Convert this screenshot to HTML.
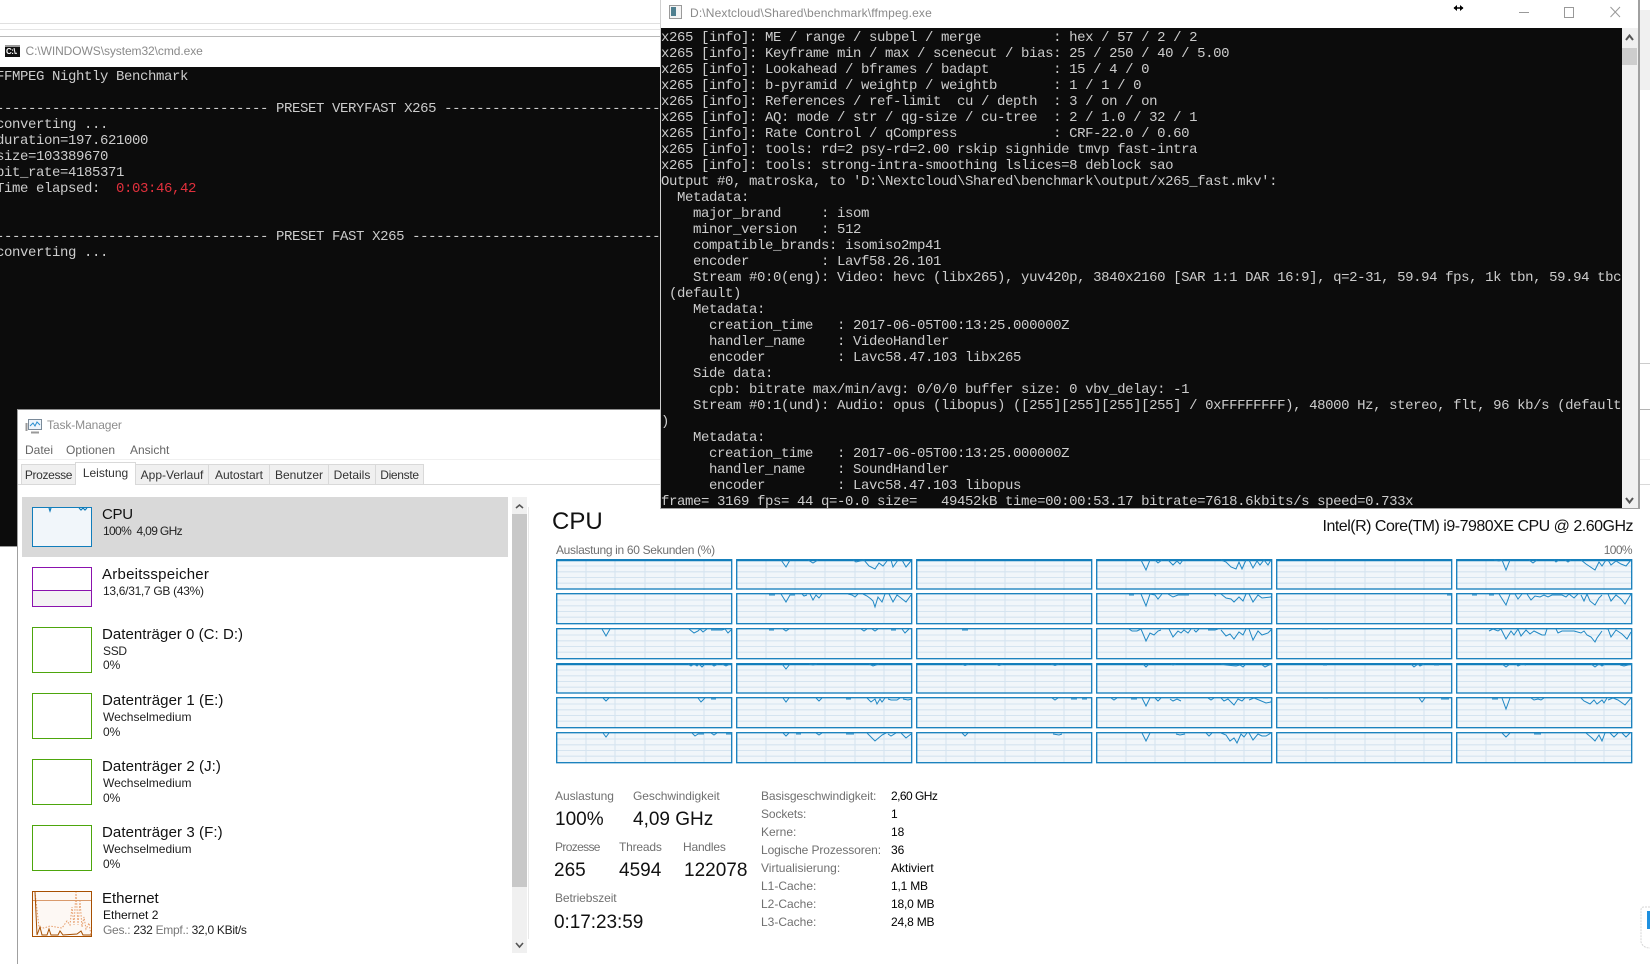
<!DOCTYPE html>
<html lang="de"><head><meta charset="utf-8"><title>FFmpeg Benchmark</title>
<style>
html,body{margin:0;padding:0;background:#fff;width:1650px;height:964px;overflow:hidden}
body{position:relative;font-family:"Liberation Sans",sans-serif;font-size:12px;color:#000}
div,pre,span.t{position:absolute}
.t{position:absolute;white-space:pre;line-height:16px}
pre{margin:0;font-family:"Liberation Mono",monospace;font-size:14px;letter-spacing:-.4px;line-height:16px;color:#ccc;white-space:pre}
.g{color:#707070}
.h{font-size:15px;line-height:18px;color:#111}
.s{color:#222}
.v{font-size:19px;line-height:22px;color:#111}
.tab{box-sizing:border-box;top:464px;height:21px;background:#f0f0f0;border:1px solid #d9d9d9;border-bottom:1px solid #d9d9d9;text-align:center;line-height:20px;color:#333;white-space:pre}
.th{box-sizing:border-box;left:32px;width:60px;background:#fff;border:1px solid #4da60c}
svg{position:absolute;left:0;top:0}
</style></head><body>

<!-- background window lines -->
<div style="left:0;top:23px;width:661px;height:1px;background:#e0e0e0"></div>
<div style="left:0;top:29px;width:661px;height:1px;background:#e4e4e4"></div>
<div style="left:0;top:36px;width:661px;height:1px;background:#b8b8b8"></div>

<!-- cmd window -->
<div style="left:0;top:67px;width:700px;height:343px;background:#0c0c0c"></div>
<div style="left:0;top:400px;width:17px;height:146px;background:#0c0c0c"></div>
<div style="left:0;top:546px;width:17px;height:1px;background:#999"></div>
<div style="left:5px;top:45px;width:15px;height:12px;background:#111;border-top:2px solid #999;box-sizing:border-box"></div>
<span class="t" style="left:6px;top:47px;font-size:8px;line-height:9px;color:#fff;font-weight:bold;letter-spacing:-.5px">C:\.</span>
<span class="t" style="left:25.500px;top:43px;color:#8a8a8a;letter-spacing:-.08px">C:\WINDOWS\system32\cmd.exe</span>
<pre style="left:-4px;top:69px;width:665px;overflow:hidden">FFMPEG Nightly Benchmark

---------------------------------- PRESET VERYFAST X265 --------------------------------------------------------------
converting ...
duration=197.621000
size=103389670
bit_rate=4185371
Time elapsed:  <span style="color:#e0303c">0:03:46,42</span>


---------------------------------- PRESET FAST X265 ------------------------------------------------------------------
converting ...</pre>

<!-- task manager -->
<div style="left:17px;top:409px;width:1633px;height:555px;background:#fff;border-left:1px solid #a0a0a0;border-top:1px solid #8c8c8c;box-sizing:border-box"></div>
<svg width="1650" height="964" style="z-index:1">
<g fill="none" stroke="#777" stroke-width="1">
<rect x="28.500" y="419.500" width="13" height="10" fill="#eef5fb" stroke="#7a8a99"/>
<path d="M30,426 33,423 35,426 37,422 40,425" stroke="#2a8fd0"/>
<path d="M26.500,423 V431 M31,432.500 H39" stroke="#999" stroke-width="2"/>
</g>
</svg>
<span class="t g" style="left:47px;top:417px;color:#8c8c8c;letter-spacing:-.1px">Task-Manager</span>
<span class="t" style="left:25px;top:442px;color:#666">Datei</span>
<span class="t" style="left:66px;top:442px;color:#666;letter-spacing:.05px">Optionen</span>
<span class="t" style="left:130px;top:442px;color:#666">Ansicht</span>
<div style="left:18px;top:459px;width:1632px;height:1px;background:#f0f0f0"></div>
<div style="left:18px;top:484px;width:1632px;height:1px;background:#d9d9d9"></div>
<div class="tab" style="left:21px;width:55px;letter-spacing:-.35px">Prozesse</div>
<div class="tab" style="left:135px;width:74px">App-Verlauf</div>
<div class="tab" style="left:208px;width:62px">Autostart</div>
<div class="tab" style="left:269px;width:60px">Benutzer</div>
<div class="tab" style="left:328px;width:48px">Details</div>
<div class="tab" style="left:375px;width:49px;letter-spacing:-.3px">Dienste</div>
<div class="tab" style="left:75px;width:61px;top:462px;height:23px;background:#fff;border-bottom:0;line-height:20px">Leistung</div>

<!-- sidebar -->
<div style="left:22px;top:497px;width:486px;height:60px;background:#d9d9d9"></div>
<div class="th" style="top:507px;height:40px;background:#f1f6fa;border-color:#117dbb"></div>
<span class="t h" style="left:102px;top:506px;letter-spacing:-.3px">CPU</span>
<span class="t s" style="left:103px;top:523px;letter-spacing:-.65px">100%  4,09 GHz</span>

<div class="th" style="top:567px;height:40px;border-color:#8b12ae"></div>
<div style="left:33px;top:590px;width:58px;height:16px;background:#f4f2f4;border-top:1px solid #8b12ae;box-sizing:border-box"></div>
<span class="t h" style="left:102px;top:566px;letter-spacing:.25px">Arbeitsspeicher</span>
<span class="t s" style="left:103px;top:583px;letter-spacing:-.3px">13,6/31,7 GB (43%)</span>

<div class="th" style="top:627px;height:46px"></div>
<span class="t h" style="left:102px;top:626px;letter-spacing:.05px">Datenträger 0 (C: D:)</span>
<span class="t s" style="left:103px;top:643px;letter-spacing:-.3px">SSD</span>
<span class="t s" style="left:103px;top:657px">0%</span>

<div class="th" style="top:693px;height:46px"></div>
<span class="t h" style="left:102px;top:692px;letter-spacing:.08px">Datenträger 1 (E:)</span>
<span class="t s" style="left:103px;top:709px">Wechselmedium</span>
<span class="t s" style="left:103px;top:724px">0%</span>

<div class="th" style="top:759px;height:46px"></div>
<span class="t h" style="left:102px;top:758px;letter-spacing:.08px">Datenträger 2 (J:)</span>
<span class="t s" style="left:103px;top:775px">Wechselmedium</span>
<span class="t s" style="left:103px;top:790px">0%</span>

<div class="th" style="top:825px;height:46px"></div>
<span class="t h" style="left:102px;top:824px;letter-spacing:.08px">Datenträger 3 (F:)</span>
<span class="t s" style="left:103px;top:841px">Wechselmedium</span>
<span class="t s" style="left:103px;top:856px">0%</span>

<div class="th" style="top:891px;height:46px;border-color:#a74f01;background:#fdf8f4"></div>
<svg width="1650" height="964" style="z-index:1">
<g transform="translate(32,891)" fill="none">
<path d="M1,9.500 H59" stroke="#d99a6c" stroke-width="1"/>
<path d="M3,1 L7,36 12,37 18,35 30,37 35,30 38,34 40,16 42,34 44,1 46,34 48,10 50,36 52,26 54,38 57,32 59,44" stroke="#e59a66" stroke-width="1" stroke-dasharray="1.500 1.500"/>
<path d="M3,1 L5,44 8,36 10,44 15,44 17,38 19,44 26,44 28,40 31,44 45,43 49,40 51,44 59,44" stroke="#a74f01" stroke-width="1"/>
</g>
<path d="M49,508 L50,511 51,508 M79,508 L81,510 83,508 85,510 87,508" fill="none" stroke="#117dbb" stroke-width="1.200"/>
</svg>
<span class="t h" style="left:102px;top:890px">Ethernet</span>
<span class="t s" style="left:103px;top:907px;color:#111">Ethernet 2</span>
<span class="t" style="left:103px;top:922px;color:#777;letter-spacing:-.28px">Ges.: <span style="color:#222">232</span> Empf.: <span style="color:#222">32,0 KBit/s</span></span>

<!-- sidebar scrollbar -->
<div style="left:512px;top:497px;width:15px;height:456px;background:#f0f0f0"></div>
<div style="left:512px;top:514px;width:15px;height:373px;background:#c8c8c8"></div>
<div style="left:528px;top:507px;width:1px;height:432px;background:#e8e8e8"></div>

<!-- right panel -->
<span class="t" style="left:552px;top:508px;font-size:24px;line-height:28px;color:#111">CPU</span>
<span class="t" style="right:17px;top:517px;font-size:16px;line-height:20px;color:#111;letter-spacing:-.5px">Intel(R) Core(TM) i9-7980XE CPU @ 2.60GHz</span>
<span class="t g" style="left:556px;top:542px;letter-spacing:-.32px">Auslastung in 60 Sekunden (%)</span>
<span class="t g" style="right:18px;top:542px;letter-spacing:-.6px">100%</span>

<svg width="1650" height="964" style="z-index:1">
<defs>
<g id="gl" stroke="#d5e4f0" stroke-width="1.100" fill="none"><path d="M30,1V31M59,1V31M89,1V31M119,1V31M148,1V31M1,7H175M1,12.800H175M1,18.500H175M1,24.200H175"/></g>
<g id="c0"><rect x=".7" y=".7" width="175" height="29.300" fill="#f1f6fa"/><use href="#gl"/><rect x=".7" y=".7" width="175" height="29.300" fill="none" stroke="#117dbb" stroke-width="1.300"/><path d="M.7,1.200H175.700" stroke="#117dbb" stroke-width="2"/></g>
<g id="c1"><rect x=".7" y=".7" width="175" height="30" fill="#f1f6fa"/><use href="#gl"/><rect x=".7" y=".7" width="175" height="30" fill="none" stroke="#117dbb" stroke-width="1.300"/></g>
</defs>
<g>
<use href="#c0" x="556" y="559"/><use href="#c0" x="736" y="559"/><use href="#c0" x="916" y="559"/><use href="#c0" x="1096" y="559"/><use href="#c0" x="1276" y="559"/><use href="#c0" x="1456" y="559"/>
<use href="#c1" x="556" y="593"/><use href="#c1" x="736" y="593"/><use href="#c1" x="916" y="593"/><use href="#c1" x="1096" y="593"/><use href="#c1" x="1276" y="593"/><use href="#c1" x="1456" y="593"/>
<use href="#c1" x="556" y="628"/><use href="#c1" x="736" y="628"/><use href="#c1" x="916" y="628"/><use href="#c1" x="1096" y="628"/><use href="#c1" x="1276" y="628"/><use href="#c1" x="1456" y="628"/>
<use href="#c0" x="556" y="663"/><use href="#c0" x="736" y="663"/><use href="#c0" x="916" y="663"/><use href="#c0" x="1096" y="663"/><use href="#c0" x="1276" y="663"/><use href="#c0" x="1456" y="663"/>
<use href="#c1" x="556" y="697"/><use href="#c1" x="736" y="697"/><use href="#c1" x="916" y="697"/><use href="#c1" x="1096" y="697"/><use href="#c1" x="1276" y="697"/><use href="#c1" x="1456" y="697"/>
<use href="#c1" x="556" y="732"/><use href="#c1" x="736" y="732"/><use href="#c1" x="916" y="732"/><use href="#c1" x="1096" y="732"/><use href="#c1" x="1276" y="732"/><use href="#c1" x="1456" y="732"/>
</g>
<g fill="none" stroke="#2088c4" stroke-width="1">
<path transform="translate(736,559)" d="M45,1 50,8 54,1 M72,1 77,4 82,1 M117,1 120,3 124,2 128,1 133,7 139,10 143,4 147,7 151,2 M155,1 157,8 162,1 M166,1 170,8 175,2"/>
<path transform="translate(1096,559)" d="M45,1 50,11 54,1 M59,1 62,4 66,1 M72,1 77,6 81,2 84,5 87,1 M125,1 130,3 135,8 140,10 143,3 146,10 150,1 M153,1 157,9 161,2 164,6 168,1 172,6 175,1"/>
<path transform="translate(1456,559)" d="M38,1 43,2 46,1 50,11 54,1 M73,1 77,4 81,1 M98,1 100,3 103,1 M109,1 112,3 115,1 M125,1 130,5 139,11 143,3 146,7 150,1 M152,1 155,6 160,2 165,5 170,7 175,1"/>

<path transform="translate(736,593)" d="M33,2 39,2 M45,1 50,9 54,2 59,2 M66,1 68,3 71,2 M74,1 77,7 80,2 83,5 86,1 M112,1 116,2 119,4 122,1 M127,1 131,3 135,6 137,8 139,14 142,4 146,9 149,1 M153,1 157,9 161,2 165,5 170,9 175,2"/>
<path transform="translate(1096,593)" d="M33,2 38,2 M45,1 50,13 54,1 59,2 62,6 66,1 M72,1 77,4 82,2 93,2 M118,1 120,3 M125,1 130,5 135,6 138,9 143,4 147,8 150,1 M153,1 157,9 162,2 166,5 175,4 176,1"/>
<path transform="translate(1276,593)" d="M171,2 176,2"/>
<path transform="translate(1456,593)" d="M16,2 21,2 M33,2 38,2 M43,1 50,12 54,1 59,1 62,6 66,1 M71,1 75,7 79,3 84,4 88,2 92,4 96,2 106,2 110,4 113,1 118,5 122,1 M125,2 128,8 131,1 134,8 139,12 143,5 146,2 M152,1 155,8 160,2 165,6 169,11 175,1"/>

<path transform="translate(556,628)" d="M46,1 50,8 54,1 M133,1 138,5 142,3 144,1 147,4 151,1 M155,2 166,2 169,1 172,5 175,2"/>
<path transform="translate(736,628)" d="M33,2 38,2 M47,1 50,3 53,1 M125,1 128,3 131,1 M136,1 139,3 142,1 M155,2 160,2 M166,1 169,5 173,1"/>
<path transform="translate(916,628)" d="M46,2 52,2"/>
<path transform="translate(1096,628)" d="M33,1 36,3 41,3 45,1 50,13 54,5 58,7 62,3 65,2 M73,1 77,9 82,3 85,5 88,2 92,5 95,1 M98,2 100,4 103,1 M112,2 119,2 122,1 M125,2 130,8 134,6 138,11 143,4 147,7 150,1 M153,1 157,12 162,3 166,7 172,5 176,1"/>
<path transform="translate(1276,628)" d="M46,1 52,1"/>
<path transform="translate(1456,628)" d="M33,3 37,1 42,3 45,1 50,11 55,3 58,7 62,1 65,8 70,2 74,6 78,3 82,5 86,7 89,7 91,1 M100,1 102,5 106,3 118,3 125,5 128,3 131,7 135,9 139,14 141,10 146,3 M150,1 152,1 155,9 160,2 166,6 171,11 175,4"/>

<path transform="translate(556,663)" d="M132,1 135,3 138,1 141,3 143,1 146,4 149,1 M155,1 158,3 162,1 M166,1 170,3 174,1"/>
<path transform="translate(736,663)" d="M46,1 50,6 54,1 M73,1 77,2 81,1 M133,1 137,3 143,1"/>
<path transform="translate(916,663)" d="M46,1 49,2.500 53,1 M80,1 83,2.500 87,1 M135,1 139,2.500 143,1"/>
<path transform="translate(1096,663)" d="M47,1 50,4 53,1 M75,1 77,2 80,1 M125,1 130,2 140,3 144,2 147,4 150,1 M165,1 169,4 173,2 176,1"/>
<path transform="translate(1276,663)" d="M47,2 51,2 M135,1 138,4 142,1 144,3 148,1 M158,2 163,2"/>
<path transform="translate(1456,663)" d="M46,1 50,4 54,1 M60,1 62,3 66,1 70,2 M135,1 139,4 143,1 146,3 149,1 M164,2 168,3 176,1"/>

<path transform="translate(556,697)" d="M47,1 50,4 53,1 M142,1 145,5 149,1 M155,2 160,2"/>
<path transform="translate(736,697)" d="M47,1 50,5 53,1 M80,1 83,4 86,1 M110,2 115,2 M131,1 135,5 139,2 141,7 144,2 146,5 149,1 M152,2 155,3 161,3 164,1 M167,2 172,3 176,2"/>
<path transform="translate(916,697)" d="M136,1 139,3 142,1 M155,2 161,2 M166,2 171,2"/>
<path transform="translate(1096,697)" d="M15,1 18,3 21,1 M35,2 41,2 M46,1 50,9 54,1 M59,1 62,4 65,1 M74,2 77,4 81,2 85,4 M112,1 115,3 118,1 M125,1 128,4 132,2 135,5 138,8 142,2 146,4 149,1 M153,3 158,1 163,3 170,6 175,5 176,1"/>
<path transform="translate(1276,697)" d="M47,1 52,1 M143,1 146,5 149,1 M165,2 173,2"/>
<path transform="translate(1456,697)" d="M36,2 42,2 M46,1 50,12 54,1 M75,1 78,3 82,2 85,3 88,1 M125,1 128,4 134,7 138,3 141,7 146,3 148,6 151,1 M152,3 157,1 162,3 169,8 175,1"/>

<path transform="translate(556,732)" d="M47,1 50,5 53,1 M136,1 139,4 142,2 148,2 M155,1 158,3 161,1 M170,2 175,2"/>
<path transform="translate(736,732)" d="M47,1 50,4 53,1 M60,2 65,2 M80,1 83,3 86,1 M110,2 118,2 M131,1 139,9 146,3 150,1 M152,2 155,4 160,1 M165,1 170,6 175,2"/>
<path transform="translate(916,732)" d="M46,1 49,4 52,1 M137,2 143,3 146,2"/>
<path transform="translate(1096,732)" d="M46,1 50,9 54,1 M80,2 84,3 89,2 M110,1 113,4 116,1 M125,1 130,3 134,9 138,6 141,11 145,2 148,5 151,1 M153,1 157,8 162,2 166,4 170,4 175,1"/>
<path transform="translate(1456,732)" d="M46,1 50,5 54,1 M78,2 85,2 M130,1 136,6 139,9 143,3 146,9 149,1 M154,1 158,5 162,1 M166,1 170,5 174,1"/>
</g>
<!-- scroll chevrons -->
<g fill="none" stroke="#555" stroke-width="1.600">
<path d="M516,508 519.500,505 523,508"/>
<path d="M516,943 519.500,947 523,943"/>
</g>
<!-- bottom right icon -->
<path d="M1650,907 H1644 Q1641,907 1641,910 V942 Q1643,948 1650,948" fill="none" stroke="#d5d5d5" stroke-width="1" stroke-dasharray="2 1"/>
<rect x="1647" y="911" width="3" height="18" fill="#1e90e0"/>
</svg>

<!-- stats -->
<span class="t g" style="left:555px;top:788px;letter-spacing:-.05px">Auslastung</span>
<span class="t g" style="left:633px;top:788px;letter-spacing:-.05px">Geschwindigkeit</span>
<span class="t v" style="left:555px;top:809px">100%</span>
<span class="t v" style="left:633px;top:809px">4,09 GHz</span>
<span class="t g" style="left:555px;top:839px;letter-spacing:-.65px">Prozesse</span>
<span class="t g" style="left:619px;top:839px;letter-spacing:-.2px">Threads</span>
<span class="t g" style="left:683px;top:839px;letter-spacing:-.2px">Handles</span>
<span class="t v" style="left:554px;top:860px">265</span>
<span class="t v" style="left:619px;top:860px">4594</span>
<span class="t v" style="left:684px;top:860px">122078</span>
<span class="t g" style="left:555px;top:890px;letter-spacing:-.1px">Betriebszeit</span>
<span class="t v" style="left:554px;top:912px;letter-spacing:-.05px">0:17:23:59</span>

<span class="t g" style="left:761px;top:788px;letter-spacing:-.1px">Basisgeschwindigkeit:</span><span class="t" style="left:891px;top:788px;letter-spacing:-.55px">2,60 GHz</span>
<span class="t g" style="left:761px;top:806px;letter-spacing:-.1px">Sockets:</span><span class="t" style="left:891px;top:806px">1</span>
<span class="t g" style="left:761px;top:824px">Kerne:</span><span class="t" style="left:891px;top:824px">18</span>
<span class="t g" style="left:761px;top:842px;letter-spacing:-.1px">Logische Prozessoren:</span><span class="t" style="left:891px;top:842px">36</span>
<span class="t g" style="left:761px;top:860px">Virtualisierung:</span><span class="t" style="left:891px;top:860px">Aktiviert</span>
<span class="t g" style="left:761px;top:878px">L1-Cache:</span><span class="t" style="left:891px;top:878px;letter-spacing:-.2px">1,1 MB</span>
<span class="t g" style="left:761px;top:896px">L2-Cache:</span><span class="t" style="left:891px;top:896px;letter-spacing:-.2px">18,0 MB</span>
<span class="t g" style="left:761px;top:914px">L3-Cache:</span><span class="t" style="left:891px;top:914px;letter-spacing:-.2px">24,8 MB</span>

<!-- right-edge bits of window behind -->
<div style="left:1640px;top:10px;width:10px;height:80px;background:#f0f0f0;z-index:2"></div>
<div style="left:1640px;top:363px;width:10px;height:1px;background:#ccc;z-index:2"></div>
<div style="left:1640px;top:409px;width:10px;height:1px;background:#b5b5b5;z-index:2"></div>

<!-- ffmpeg window -->
<div style="left:660px;top:0;width:980px;height:509px;background:#fff;border-left:1px solid #d0d0d0;border-right:2px solid #a0a0a0;border-bottom:1px solid #a0a0a0;box-sizing:border-box;z-index:3"></div>
<div style="left:661px;top:28px;width:961px;height:480px;background:#0c0c0c;z-index:3"></div>
<div style="left:1622px;top:28px;width:16px;height:480px;background:#f0f0f0;z-index:3"></div>
<div style="left:1622px;top:48px;width:15px;height:17px;background:#cdcdcd;z-index:3"></div>
<span class="t" style="left:690px;top:5px;color:#8a8a8a;letter-spacing:.15px;z-index:3">D:\Nextcloud\Shared\benchmark\ffmpeg.exe</span>
<pre style="left:661px;top:30px;width:961px;height:478px;overflow:hidden;z-index:3">x265 [info]: ME / range / subpel / merge         : hex / 57 / 2 / 2
x265 [info]: Keyframe min / max / scenecut / bias: 25 / 250 / 40 / 5.00
x265 [info]: Lookahead / bframes / badapt        : 15 / 4 / 0
x265 [info]: b-pyramid / weightp / weightb       : 1 / 1 / 0
x265 [info]: References / ref-limit  cu / depth  : 3 / on / on
x265 [info]: AQ: mode / str / qg-size / cu-tree  : 2 / 1.0 / 32 / 1
x265 [info]: Rate Control / qCompress            : CRF-22.0 / 0.60
x265 [info]: tools: rd=2 psy-rd=2.00 rskip signhide tmvp fast-intra
x265 [info]: tools: strong-intra-smoothing lslices=8 deblock sao
Output #0, matroska, to 'D:\Nextcloud\Shared\benchmark\output/x265_fast.mkv':
  Metadata:
    major_brand     : isom
    minor_version   : 512
    compatible_brands: isomiso2mp41
    encoder         : Lavf58.26.101
    Stream #0:0(eng): Video: hevc (libx265), yuv420p, 3840x2160 [SAR 1:1 DAR 16:9], q=2-31, 59.94 fps, 1k tbn, 59.94 tbc
 (default)
    Metadata:
      creation_time   : 2017-06-05T00:13:25.000000Z
      handler_name    : VideoHandler
      encoder         : Lavc58.47.103 libx265
    Side data:
      cpb: bitrate max/min/avg: 0/0/0 buffer size: 0 vbv_delay: -1
    Stream #0:1(und): Audio: opus (libopus) ([255][255][255][255] / 0xFFFFFFFF), 48000 Hz, stereo, flt, 96 kb/s (default
)
    Metadata:
      creation_time   : 2017-06-05T00:13:25.000000Z
      handler_name    : SoundHandler
      encoder         : Lavc58.47.103 libopus
frame= 3169 fps= 44 q=-0.0 size=   49452kB time=00:00:53.17 bitrate=7618.6kbits/s speed=0.733x</pre>

<svg width="1650" height="964" style="z-index:4">
<!-- ffmpeg title icon -->
<rect x="669.500" y="5.500" width="12" height="13" fill="#f4f4f4" stroke="#9a9a9a"/>
<rect x="671" y="7" width="5" height="9" fill="#4f7f8f"/>
<!-- resize cursor -->
<path d="M1454,8 H1463" stroke="#000" stroke-width="1.500"/>
<path d="M1457,5 V11 L1453.500,8 Z M1460,5 V11 L1463.500,8 Z" fill="#000"/>
<!-- window buttons -->
<path d="M1519,12.500 H1529" stroke="#999" stroke-width="1"/>
<rect x="1564.500" y="7.500" width="9" height="10" fill="none" stroke="#999" stroke-width="1"/>
<path d="M1610.500,7 L1620,17 M1620,7 L1610.500,17" stroke="#999" stroke-width="1"/>
<!-- console scroll arrows -->
<path d="M1626,40 1629.500,35.500 1633,40" fill="none" stroke="#555" stroke-width="2"/>
<path d="M1626,498 1629.500,502.500 1633,498" fill="none" stroke="#555" stroke-width="2"/>
</svg>
</body></html>
